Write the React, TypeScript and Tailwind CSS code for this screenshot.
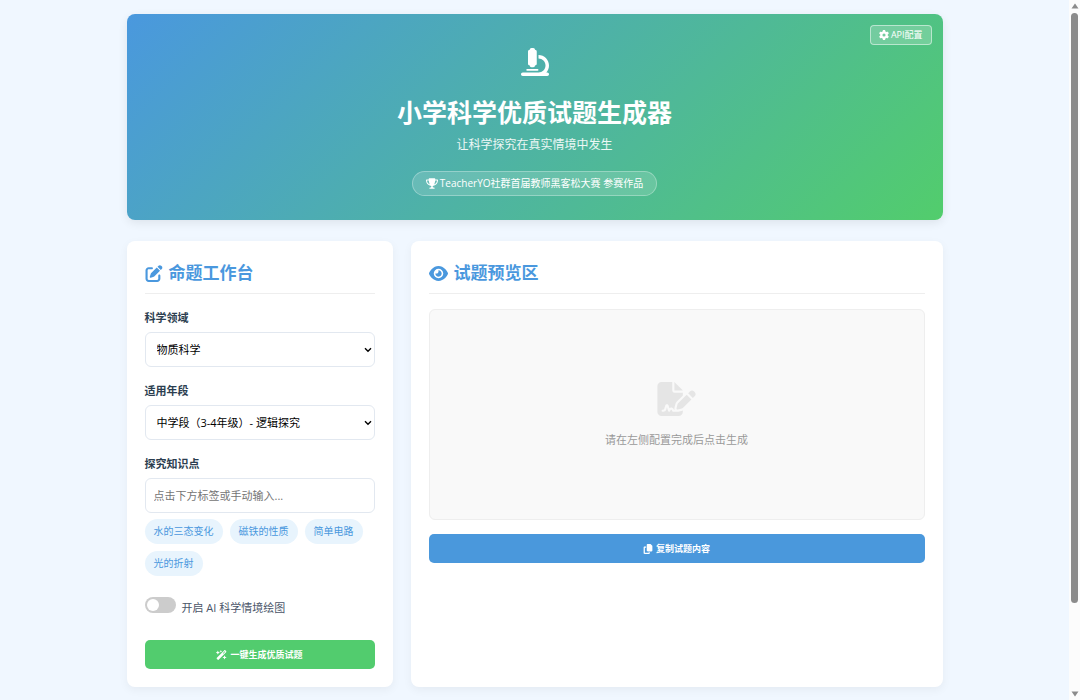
import { useState } from "react";
import type { ReactNode } from "react";
import {
  FaCopy,
  FaEye,
  FaFileSignature,
  FaGear,
  FaMicroscope,
  FaPenToSquare,
  FaTrophy,
  FaWandMagicSparkles,
} from "react-icons/fa6";

const fields = ["物质科学", "生命科学", "地球与宇宙科学", "技术与工程"];

const grades = [
  "低学段（1-2年级）- 观察体验",
  "中学段（3-4年级）- 逻辑探究",
  "高学段（5-6年级）- 综合应用",
];

const topics = ["水的三态变化", "磁铁的性质", "简单电路", "光的折射"];

export default function App() {
  return (
    <div className="flex h-screen bg-[#f0f7ff] font-['Open_Sans','Noto_Sans_CJK_SC',sans-serif] text-[#2c3e50]">
      <main className="min-w-0 flex-1 overflow-y-auto py-[14px] [scrollbar-width:none]">
        <div className="mx-auto max-w-[816px]">
          <Header />
          <div className="mt-[21px] grid grid-cols-[1fr_2fr] gap-[18px]">
            <Workbench />
            <Preview />
          </div>
        </div>
      </main>
      <ScrollTrack />
    </div>
  );
}

function Header() {
  return (
    <header className="relative flex flex-col items-center rounded-lg bg-[linear-gradient(135deg,#4a98de,#52cd6c)] pt-[34px] pb-6 text-white shadow-[0_3px_10px_rgba(0,0,0,0.08)]">
      <button
        type="button"
        className="absolute top-[11px] right-[11px] flex h-5 items-center gap-0.5 rounded border border-white/50 bg-white/20 px-2 text-[9px]"
      >
        <FaGear className="h-[10px] w-[10px]" />
        API配置
      </button>
      <FaMicroscope className="h-7 w-7" />
      <h1 className="mt-[18px] text-[25px] leading-9 font-bold">小学科学优质试题生成器</h1>
      <p className="mt-1.5 text-xs leading-[18px] text-white/90">让科学探究在真实情境中发生</p>
      <div className="mt-[17px] flex h-[25px] items-center gap-0.5 rounded-full border border-white/30 bg-white/15 px-[13px] text-[10px]">
        <FaTrophy className="h-[11px] w-3" />
        TeacherYO社群首届教师黑客松大赛 参赛作品
      </div>
    </header>
  );
}

function Card({ icon, title, children }: { icon: ReactNode; title: string; children: ReactNode }) {
  return (
    <section className="rounded-lg bg-white p-[18px] shadow-[0_3px_10px_rgba(0,0,0,0.05)]">
      <h2 className="mb-[15px] flex items-center gap-1.5 border-b border-[#eeeeee] pb-1.5 text-[17px] leading-7 font-bold text-[#4a98de]">
        {icon}
        {title}
      </h2>
      {children}
    </section>
  );
}

function SelectField({
  id,
  label,
  options,
  initial,
}: {
  id: string;
  label: string;
  options: string[];
  initial: string;
}) {
  return (
    <div className="mb-[15px]">
      <label htmlFor={id} className="mb-[5px] block text-[11px] leading-[18px] font-bold">
        {label}
      </label>
      <div className="relative">
        <select
          id={id}
          defaultValue={initial}
          className="block h-[35px] w-full appearance-none rounded-md border border-[#e2e8f0] bg-white px-[11px] pt-0.5 text-[11px] text-black"
        >
          {options.map((o) => (
            <option key={o}>{o}</option>
          ))}
        </select>
        <svg
          viewBox="0 0 8 6"
          className="pointer-events-none absolute top-[15px] right-[3px] h-1.5 w-2 text-black"
          fill="none"
          stroke="currentColor"
          strokeWidth="1.4"
        >
          <path d="M1 1.2 4 4.2 7 1.2" />
        </svg>
      </div>
    </div>
  );
}

function Workbench() {
  const [topic, setTopic] = useState("");

  return (
    <Card icon={<FaPenToSquare className="h-[17px] w-[18px]" />} title="命题工作台">
      <SelectField id="field" label="科学领域" options={fields} initial={fields[0]} />
      <SelectField id="grade" label="适用年段" options={grades} initial={grades[1]} />

      <label htmlFor="topic" className="mb-[5px] block text-[11px] leading-[18px] font-bold">
        探究知识点
      </label>
      <input
        id="topic"
        type="text"
        value={topic}
        onChange={(e) => setTopic(e.target.value)}
        placeholder="点击下方标签或手动输入..."
        className="block h-[35px] w-full rounded-md border border-[#e2e8f0] bg-white px-2 text-[11px] text-black placeholder:text-[#757575]"
      />

      {/* Topic tags */}
      <div className="mt-1.5 flex flex-wrap gap-[7px]">
        {topics.map((t) => (
          <button
            key={t}
            type="button"
            onClick={() => setTopic(t)}
            className="h-[25px] rounded-full bg-[#e8f4fd] px-[9px] text-[10px] text-[#4a98de]"
          >
            {t}
          </button>
        ))}
      </div>

      <label className="mt-[21px] flex cursor-pointer gap-1.5 text-[11px] text-[#4a5568]">
        <input type="checkbox" className="peer sr-only" />
        <span className="flex h-4 w-[31px] items-center rounded-full bg-[#cccccc] px-0.5 peer-checked:justify-end peer-checked:bg-[#52cd6c]">
          <span className="h-3 w-3 rounded-full bg-white" />
        </span>
        <span className="pt-0.5 leading-[18px]">开启 AI 科学情境绘图</span>
      </label>

      <button
        type="button"
        className="mt-[23px] flex h-[29px] w-full items-center justify-center gap-[3px] rounded-[5px] bg-[#52cc6e] text-[9px] font-bold text-white"
      >
        <FaWandMagicSparkles className="h-[10px] w-[11px]" />
        一键生成优质试题
      </button>
    </Card>
  );
}

function Preview() {
  return (
    <Card icon={<FaEye className="h-[19px] w-[19px]" />} title="试题预览区">
      <div className="flex h-[211px] flex-col items-center justify-center rounded-md border border-[#eeeeee] bg-[#f9f9f9] pt-0.5 text-[#999999]">
        <FaFileSignature className="h-[34px] w-[39px] text-[#e5e5e5]" />
        <p className="mt-[15px] text-[11px] leading-[18px]">请在左侧配置完成后点击生成</p>
      </div>
      <button
        type="button"
        className="mt-[14px] flex h-[29px] w-full items-center justify-center gap-[3px] rounded-[5px] bg-[#4a98dc] text-[9px] font-bold text-white"
      >
        <FaCopy className="h-[10px] w-[10px]" />
        复制试题内容
      </button>
    </Card>
  );
}

function ScrollTrack() {
  return (
    <div aria-hidden="true" className="flex w-[11px] flex-col items-center bg-[#fcfcfc] py-[3px]">
      <svg viewBox="0 0 8 6" className="h-1.5 w-2 shrink-0 fill-[#8b8b8b]">
        <path d="M4 0.5 7.5 5.5H0.5z" />
      </svg>
      <div className="flex w-full flex-1 flex-col items-center pt-1">
        <div className="h-[87%] w-[7px] rounded-full bg-[#8b8b8b]" />
      </div>
      <svg viewBox="0 0 8 6" className="h-1.5 w-2 shrink-0 fill-[#8b8b8b]">
        <path d="M4 5.5 0.5 0.5h7z" />
      </svg>
    </div>
  );
}
